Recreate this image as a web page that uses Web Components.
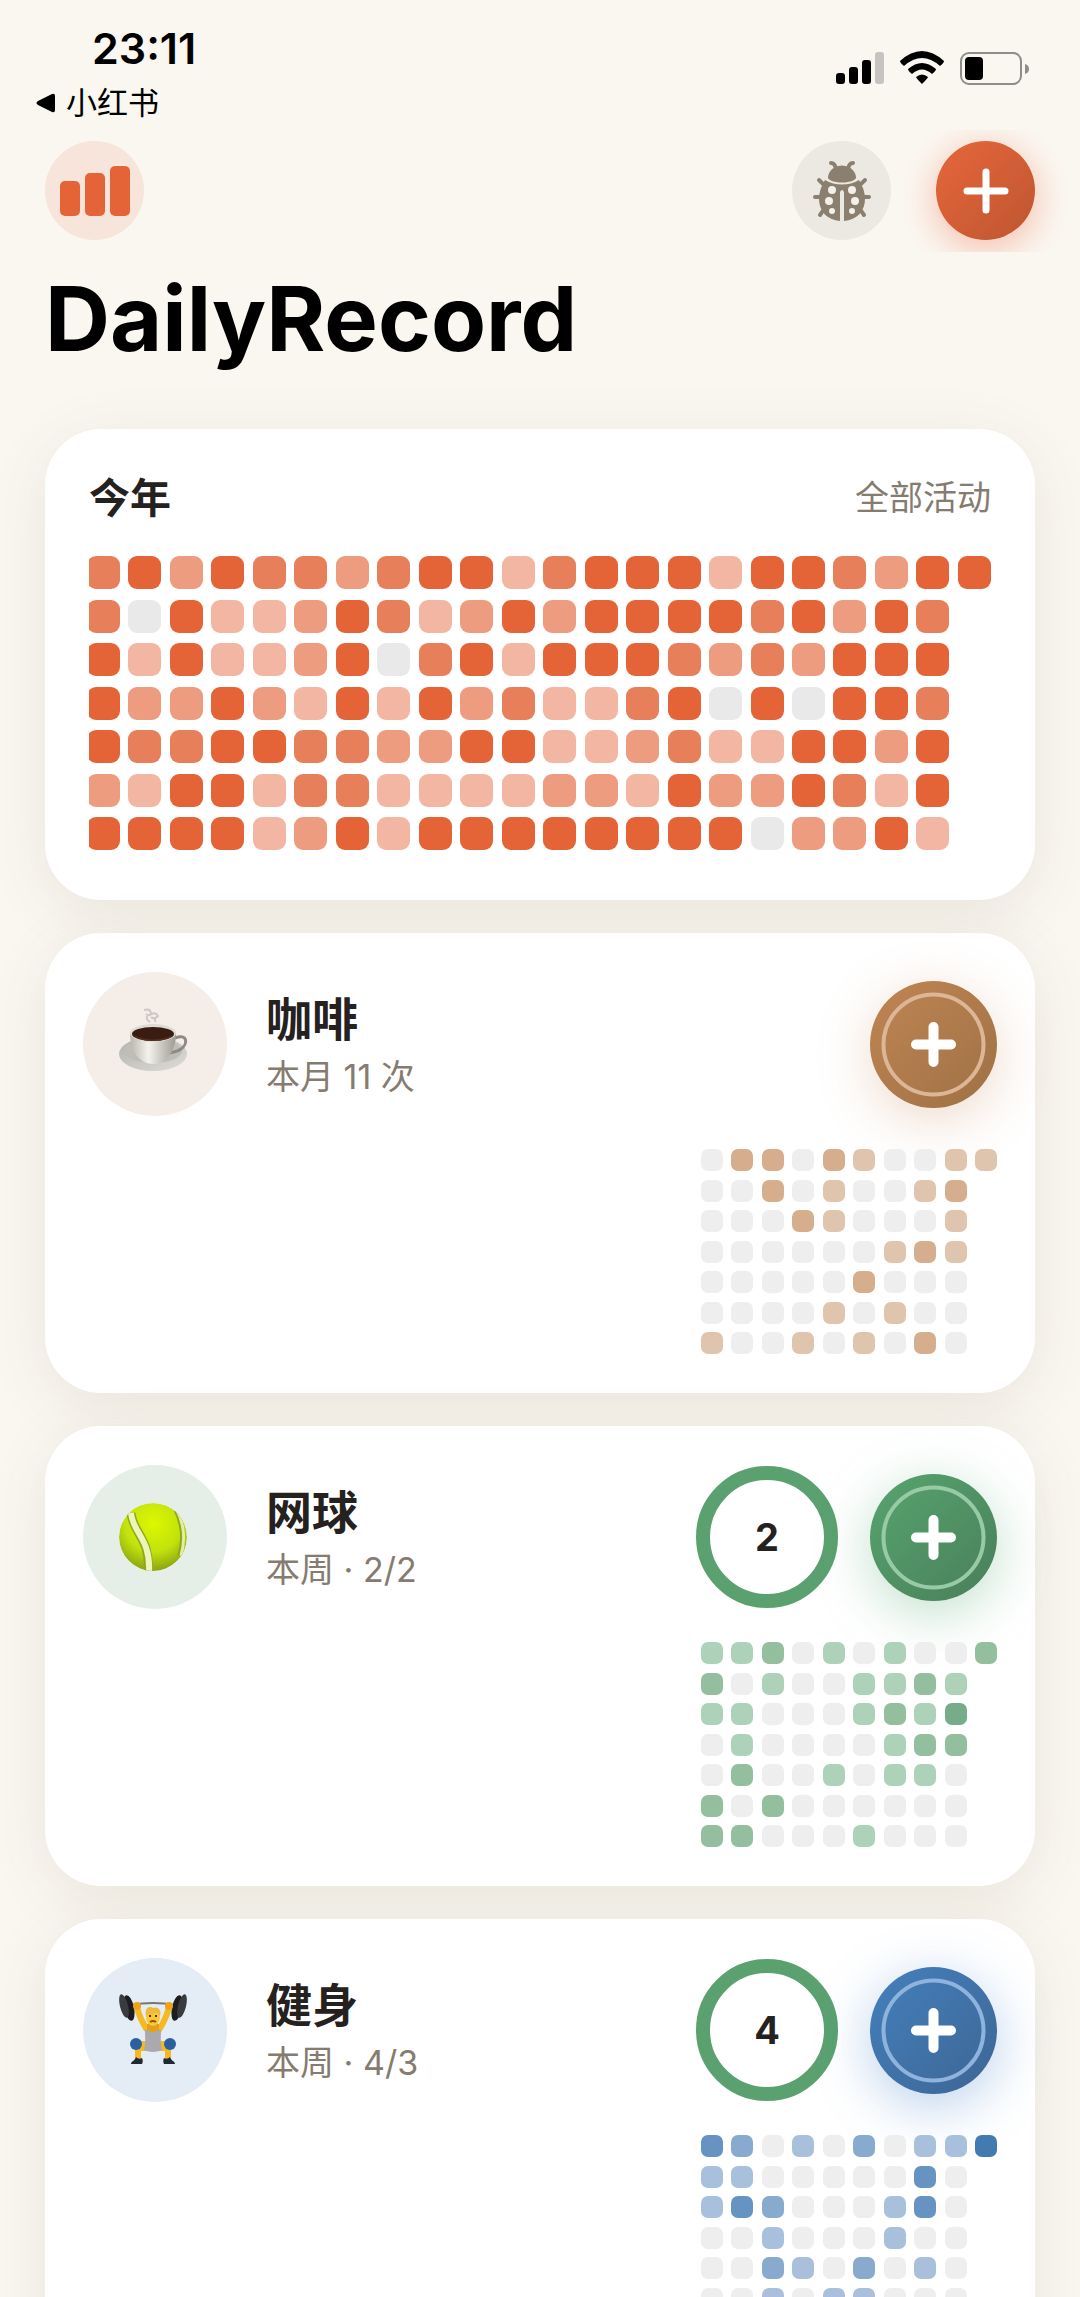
<!DOCTYPE html>
<html lang="zh-CN">
<head>
<meta charset="utf-8">
<meta name="viewport" content="width=device-width, initial-scale=1">
<title>DailyRecord</title>
<style>
  :root {
    --font: Inter, "Noto Sans CJK SC", sans-serif;
    --bg: #faf7f1;
    --ink: #25211e;
    --muted: #857b6e;
    --accent: #e46438;
    --done: #5ba170;
    --fs-sm: 34px;
    --fs-md: 41px;
    --fs-lg: 46px;
    --gutter: 45px;
    --gap: 33px;
  }
  body {
    margin: 0;
    height: 100vh;
    overflow: hidden;
    background: var(--bg);
    color: var(--ink);
    font-family: var(--font);
  }
</style>
</head>
<body>
<daily-app>
  <status-bar slot="status" time="23:11" back="小红书"></status-bar>

  <round-button slot="left" label="统计" tone="accent">
    <svg width="70" height="50" viewBox="0 0 70 50" fill="#e46438">
      <rect x="0" y="15" width="20" height="35" rx="5"/>
      <rect x="25" y="7" width="20" height="43" rx="5"/>
      <rect x="50" y="0" width="20" height="50" rx="5"/>
    </svg>
  </round-button>
  <round-button slot="right" label="调试" tone="plain">
    <svg width="58" height="60" viewBox="0 0 58 60">
      <g fill="none" stroke="#8b7f70" stroke-width="4" stroke-linecap="round">
        <path d="M18 2q4 0 5 6M40 2q-4 0-5 6"/>
        <path d="M6 19q3 4 8 6M52 19q-3 4-8 6M2 36h8M56 36h-8M7 54q2-4 6-7M51 54q-2-4-6-7"/>
      </g>
      <path fill="#8b7f70" d="M22 6q7-3 14 0c5 3 7 7 7 11-3 6-25 6-28 0 0-4 2-8 7-11z"/>
      <path fill="#8b7f70" d="M12 19c10 6 24 6 34 0 4 6 6 13 6 19 0 12-8 21-21 22V31q-2-4-4 0v29C14 59 6 50 6 38c0-6 2-13 6-19z"/>
      <g fill="#f3f0e9">
        <circle cx="19" cy="29" r="4"/><circle cx="39" cy="29" r="4"/>
        <circle cx="16" cy="40" r="4"/><circle cx="42" cy="40" r="4"/>
        <circle cx="19" cy="50" r="3"/><circle cx="39" cy="50" r="3"/>
      </g>
    </svg>
  </round-button>
  <round-button slot="right" label="新建" tone="solid">
    <svg width="46" height="46" viewBox="0 0 46 46" stroke="#fff" stroke-width="7" stroke-linecap="round">
      <path d="M23 4v38M4 23h38"/>
    </svg>
  </round-button>

  <span slot="title">DailyRecord</span>

  <year-card>
    <span slot="name">今年</span>
    <span slot="scope">全部活动</span>
    <heat-map palette="orange" label="今年全部活动" rows="
      3424332344134441443244
      304112431242444434243
      414112403414443232444
      422421414231134040443
      433443322441123114424
      214413311112214224314
      444412414444444402241"></heat-map>
  </year-card>

  <habit-card palette="brown">
    <svg slot="icon" width="72" height="72" viewBox="0 0 72 72">
      <defs>
        <linearGradient id="cup" x2="1"><stop stop-color="#b9b7ad"/><stop offset=".4" stop-color="#f3f2ec"/><stop offset="1" stop-color="#9d9b91"/></linearGradient>
        <linearGradient id="dish" x2="1" y2="1"><stop stop-color="#b4b2ac"/><stop offset="1" stop-color="#dddcd7"/></linearGradient>
      </defs>
      <path d="M25 2q6-2 7 3-1 4-5 1M31 7q5-4 8 1-4 4-7 1M28 8q-1 4 3 6M34 10q3 1 2 4" fill="none" stroke="#cfc7c7" stroke-width="2"/>
      <ellipse cx="34" cy="46" rx="34" ry="17" fill="url(#dish)"/>
      <ellipse cx="34" cy="43" rx="29" ry="12" fill="#bfbdb7"/>
      <path d="M56 30c13-5 13 6 6 11-4 3-8 3-11 4" fill="none" stroke="#8d8a82" stroke-width="3"/>
      <path d="M11 25h46c0 16-8 31-23 31S11 41 11 25z" fill="url(#cup)"/>
      <ellipse cx="34" cy="25" rx="23" ry="9" fill="#dedcd4"/>
      <ellipse cx="34" cy="26" rx="21" ry="7" fill="#3a1d12"/>
      <path d="M14 27q20 9 40 0-6 6-20 6t-20-6z" fill="#5a3020"/>
    </svg>
    <span slot="name">咖啡</span>
    <span slot="note">本月 11 次</span>
    <heat-map slot="map" small palette="brown" label="咖啡记录" rows="
      0220210011
      002010012
      000210001
      000000121
      000002000
      000010100
      100101020"></heat-map>
  </habit-card>

  <habit-card palette="green" count="2">
    <svg slot="icon" width="72" height="70" viewBox="0 0 72 70">
      <defs>
        <radialGradient id="felt" cx=".5" cy=".3" r=".7"><stop stop-color="#dcf800"/><stop offset=".6" stop-color="#c2e20c"/><stop offset="1" stop-color="#8ba412"/></radialGradient>
        <clipPath id="ball"><circle cx="34" cy="35" r="34"/></clipPath>
      </defs>
      <g clip-path="url(#ball)" fill="none">
        <circle cx="34" cy="35" r="34" fill="url(#felt)"/>
        <path d="M12 11c2 21 20 25 17 60" stroke="#8fa81c" stroke-width="9"/>
        <path d="M12 11c2 21 20 25 18 60" stroke="#edf5ba" stroke-width="6"/>
        <path d="M57 8c7 14 9 28 4 46" stroke="#8fa81c" stroke-width="5"/>
        <path d="M58 8c7 14 9 28 4 46" stroke="#e1efa0" stroke-width="3"/>
      </g>
    </svg>
    <span slot="name">网球</span>
    <span slot="note">本周 · 2/2</span>
    <heat-map slot="map" small palette="green" label="网球记录" rows="
      1120101002
      201001121
      110001213
      010000122
      020010110
      202000000
      220001000"></heat-map>
  </habit-card>

  <habit-card palette="blue" count="4">
    <svg slot="icon" width="72" height="72" viewBox="0 0 72 72">
      <path d="M12 11Q34 7 56 11" fill="none" stroke="#777" stroke-width="2"/>
      <g fill="#1d1d1f">
        <ellipse cx="10" cy="14" rx="5" ry="13" transform="rotate(-12 10 14)"/>
        <ellipse cx="58" cy="14" rx="5" ry="13" transform="rotate(12 58 14)"/>
      </g>
      <g fill="#3a3b3e">
        <ellipse cx="5" cy="12" rx="4" ry="12" transform="rotate(-14 5 12)"/>
        <ellipse cx="63" cy="12" rx="4" ry="12" transform="rotate(14 63 12)"/>
      </g>
      <g fill="none" stroke="#f5b921">
        <path d="M18 13c2 9 5 15 10 23M50 13c-2 9-5 15-10 23" stroke-width="6"/>
        <path d="M30 52H18M38 52h12" stroke-width="10"/>
        <path d="M19 52v13M49 52v13" stroke-width="6"/>
      </g>
      <g fill="#eea313"><circle cx="18" cy="12" r="4"/><circle cx="50" cy="12" r="4"/></g>
      <path d="M26 36q8-3 16 0c0 7-1 10 1 20q-9 4-18 0c2-10 1-13 1-20z" fill="#a9a9ae"/>
      <path d="M28 36q6 4 12 0v-6H28z" fill="#e6a016"/>
      <ellipse cx="34" cy="23" rx="7" ry="9" fill="#fcc733"/>
      <path d="M27 22c-2-10 5-10 7-8 5-2 9 2 7 8-2-2-2-3-3-3-3 1-8 1-11 3z" fill="#f0bb3a"/>
      <path d="M30 22h2M36 22h2" stroke="#54350d" stroke-width="2"/>
      <path d="M31 28q3-2 6 0" fill="none" stroke="#8d5212" stroke-width="2"/>
      <g fill="#2b609e"><circle cx="17" cy="50" r="6"/><circle cx="51" cy="50" r="6"/></g>
      <path d="M12 70c0-3 4-3 5-7 2 2 4 2 6 1 1 2 1 4 0 6zM56 70c0-3-4-3-5-7-2 2-4 2-6 1-1 2-1 4 0 6z" fill="#202a37"/>
    </svg>
    <span slot="name">健身</span>
    <span slot="note">本周 · 4/3</span>
    <heat-map slot="map" small palette="blue" label="健身记录" rows="
      3201020114
      110000030
      132000130
      001000100
      002102010
      001011000
      000000000"></heat-map>
  </habit-card>
</daily-app>

<script>
// empty cell first, then the levels from light to full
const PALETTES = {
  orange: ['#e9e9e9', '#f2b6a3', '#ed9c80', '#e77f5b', '#e46438'],
  brown: ['#eeeeee', '#e0c5ae', '#d6ae8d', '#c8966b', '#b98050'],
  green: ['#eeeeee', '#aed1ba', '#93bf9f', '#76ad88', '#5ba170'],
  blue: ['#eeeeee', '#a8c0dc', '#88aacf', '#6693c1', '#437ab0'],
};

const BUTTONS = {
  brown: { from: '#bb8251', to: '#a17346', ring: '#dcb696', glow: 'rgb(200 130 80 / 0.3)', soft: '#f4ede8' },
  green: { from: '#559f6b', to: '#4b825c', ring: '#98cba5', glow: 'rgb(80 165 110 / 0.36)', soft: '#e5efe8' },
  blue: { from: '#437cb6', to: '#3e6898', ring: '#8eb4de', glow: 'rgb(60 125 200 / 0.36)', soft: '#e4ecf5' },
};

class BaseElement extends HTMLElement {
  connectedCallback() {
    if (this.shadowRoot) return;
    this.attachShadow({ mode: 'open' }).innerHTML = this.render();
  }
}

class DailyApp extends BaseElement {
  render() {
    return `
      <style>
        :host { display: block; }
        nav {
          display: flex;
          justify-content: space-between;
          padding: 11px var(--gutter) 12px;
          overflow: hidden;
        }
        .group { display: flex; gap: var(--gutter); }
        h1 {
          margin: 0;
          padding: 12px var(--gutter) 0;
          color: #000;
          font-size: 90px;
          line-height: 110px;
          font-weight: 700;
        }
        main {
          display: flex;
          flex-direction: column;
          gap: var(--gap);
          padding: 55px var(--gutter);
        }
      </style>
      <slot name="status"></slot>
      <nav>
        <div class="group"><slot name="left"></slot></div>
        <div class="group"><slot name="right"></slot></div>
      </nav>
      <h1><slot name="title"></slot></h1>
      <main><slot></slot></main>
    `;
  }
}

class StatusBar extends BaseElement {
  render() {
    return `
      <style>
        :host {
          display: flex;
          justify-content: space-between;
          height: 130px;
          padding: 0 50px 0 35px;
          box-sizing: border-box;
          color: #000;
        }
        .left { display: flex; flex-direction: column; align-items: flex-start; gap: 4px; padding-top: 22px; }
        time { padding-left: 57px; font-size: 43px; line-height: 52px; font-weight: 600; }
        a {
          display: flex;
          align-items: center;
          gap: 10px;
          color: inherit;
          font-size: 31px;
          line-height: 50px;
          text-decoration: none;
        }
        .right { display: flex; gap: 16px; padding-top: 51px; }
      </style>
      <div class="left">
        <time>${this.getAttribute('time')}</time>
        <a href="#back">
          <svg width="21" height="20" viewBox="0 0 21 20"><path d="M3 8L17 1q3-1 3 2v14q0 3-3 2L3 12q-3-2 0-4z"/></svg>
          <span>${this.getAttribute('back')}</span>
        </a>
      </div>
      <div class="right">
        <svg width="48" height="34" viewBox="0 0 48 34" role="img" aria-label="信号">
          <rect x="0" y="22" width="9" height="11" rx="3"/>
          <rect x="13" y="16" width="9" height="17" rx="3"/>
          <rect x="26" y="9" width="9" height="24" rx="3"/>
          <rect x="39" y="1" width="9" height="32" rx="3" fill="#c6c3c0"/>
        </svg>
        <svg width="44" height="34" viewBox="0 0 44 34" role="img" aria-label="Wi-Fi">
          <path d="M0 10Q22-10 44 10q0 2-4 5Q22-1 4 15 0 12 0 10z"/>
          <path d="M8 18Q22 6 36 18q0 2-4 5Q22 14 12 23 8 20 8 18z"/>
          <path d="M16 26q6-5 12 0 0 1-6 7-6-6-6-7z"/>
        </svg>
        <svg width="70" height="35" viewBox="0 0 70 35" role="img" aria-label="电量">
          <rect x="1" y="2" width="60" height="31" rx="8" fill="none" stroke="#8f8d89" stroke-width="2"/>
          <rect x="5" y="6" width="18" height="23" rx="4"/>
          <path d="M65 13q4 1 4 5t-4 5z" fill="#8f8d89"/>
        </svg>
      </div>
    `;
  }
}

class RoundButton extends BaseElement {
  render() {
    return `
      <style>
        :host { display: block; }
        button {
          display: grid;
          place-items: center;
          width: 99px;
          height: 99px;
          padding: 0;
          border: 0;
          border-radius: 50%;
        }
        .accent { background: #f7e4db; }
        .plain { background: #ece9e2; }
        .solid {
          background: linear-gradient(135deg, #df6339 20%, #bd5630);
          box-shadow: 0 8px 36px rgb(240 95 50 / 0.4);
        }
      </style>
      <button class="${this.getAttribute('tone')}" aria-label="${this.getAttribute('label')}"><slot></slot></button>
    `;
  }
}

class HeatMap extends BaseElement {
  render() {
    const colors = PALETTES[this.getAttribute('palette')];
    const rows = this.getAttribute('rows').trim().split(/\s+/);
    const columns = rows[0].length;
    const cells = rows
      .flatMap((row) => Array.from({ length: columns }, (_, i) => row[i]))
      .map((level) => `<i${level ? ` style="background:${colors[level]}"` : ''}></i>`)
      .join('');
    return `
      <style>
        :host { --cell: 33px; --radius: 9px; display: block; height: 294px; }
        :host([small]) { --cell: 22px; --radius: 7px; width: 296px; height: 205px; }
        div {
          display: grid;
          grid-template: repeat(7, var(--cell)) / repeat(${columns}, var(--cell));
          place-content: space-between;
          height: 100%;
        }
        i { border-radius: var(--radius); }
      </style>
      <div role="img" aria-label="${this.getAttribute('label')}">${cells}</div>
    `;
  }
}

const cardStyle = `
  :host {
    display: flex;
    flex-direction: column;
    gap: var(--gap);
    border-radius: 56px;
    background: #fff;
    box-shadow: 0 12px 60px rgb(85 75 50 / 0.1);
  }
  h2 { margin: 0; font-weight: 700; }
  .muted { color: var(--muted); font-size: var(--fs-sm); line-height: 44px; font-weight: 400; }
`;

class YearCard extends BaseElement {
  render() {
    return `
      <style>
        ${cardStyle}
        :host { padding: 44px 44px 50px; }
        header { display: flex; align-items: center; justify-content: space-between; }
        h2 { font-size: var(--fs-md); line-height: 50px; font-weight: 600; }
        .clip { overflow: hidden; }
        /* oldest week slides out under the left edge */
        ::slotted(heat-map) { margin-left: -2px; }
      </style>
      <header>
        <h2><slot name="name"></slot></h2>
        <span class="muted"><slot name="scope"></slot></span>
      </header>
      <div class="clip"><slot></slot></div>
    `;
  }
}

class GoalRing extends BaseElement {
  render() {
    return `
      <style>
        :host {
          display: grid;
          place-items: center;
          box-sizing: border-box;
          width: 142px;
          height: 142px;
          border: 14px solid var(--done);
          border-radius: 50%;
          font-size: 38px;
          font-weight: 700;
        }
      </style>
      <slot></slot>
    `;
  }
}

class HabitCard extends BaseElement {
  render() {
    const tone = BUTTONS[this.getAttribute('palette')];
    const count = this.getAttribute('count');
    return `
      <style>
        ${cardStyle}
        :host { padding: 39px 38px; }
        header { display: flex; align-items: center; gap: 39px; }
        .icon {
          display: grid;
          place-items: center;
          width: 144px;
          height: 144px;
          border-radius: 50%;
          background: ${tone.soft};
        }
        .text { flex: 1; display: flex; flex-direction: column; gap: 7px; }
        h2 { font-size: var(--fs-lg); line-height: 58px; }
        .actions { display: flex; align-items: center; gap: 32px; }
        button {
          display: grid;
          place-items: center;
          width: 127px;
          height: 127px;
          padding: 0;
          border: 0;
          border-radius: 50%;
          background: linear-gradient(135deg, ${tone.from} 15%, ${tone.to} 90%);
          box-shadow: 0 12px 54px ${tone.glow};
        }
        ::slotted(heat-map) { align-self: flex-end; }
      </style>
      <header>
        <div class="icon"><slot name="icon"></slot></div>
        <div class="text">
          <h2><slot name="name"></slot></h2>
          <span class="muted"><slot name="note"></slot></span>
        </div>
        <div class="actions">
          ${count ? `<goal-ring>${count}</goal-ring>` : ''}
          <button aria-label="添加记录">
            <svg width="105" height="105" viewBox="0 0 105 105" fill="none">
              <circle cx="52.5" cy="52.5" r="50" stroke="${tone.ring}" stroke-width="4"/>
              <path d="M52.5 35v35M35 52.5h35" stroke="#fff" stroke-width="10" stroke-linecap="round"/>
            </svg>
          </button>
        </div>
      </header>
      <slot name="map"></slot>
    `;
  }
}

customElements.define('daily-app', DailyApp);
customElements.define('status-bar', StatusBar);
customElements.define('round-button', RoundButton);
customElements.define('heat-map', HeatMap);
customElements.define('year-card', YearCard);
customElements.define('goal-ring', GoalRing);
customElements.define('habit-card', HabitCard);
</script>
</body>
</html>
